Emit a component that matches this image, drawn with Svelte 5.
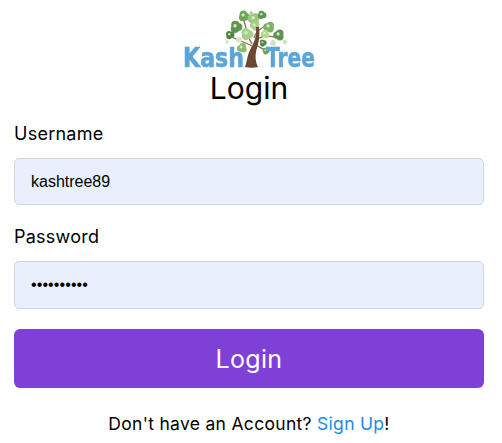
<script>
  const clusters = [
    [245,16,4.5,'#6ea45c'],[255,19,5,'#9cc77a'],[263,15,3.5,'#5f9450'],[256,26,4,'#a9d08a'],[237,27,5,'#5f9450'],
    [270,27,4.5,'#7fb069'],[248,34,5,'#a9d08a'],[280,35,4.5,'#5f9450'],[231,35,3.5,'#4f8444'],[266,34,3.5,'#b5d88f'],
    [264,43,3,'#4f8444'],[243,48,4,'#8dbb6e'],[267,51,3,'#6fa35a'],[274,43,2.5,'#cfe6b8'],[286,42,2,'#cfe6b8'],[240,40,2.5,'#d5e9c2'],[278,49,1.8,'#d5e9c2'],[252,13,1.5,'#a9d08a'],[228,42,1.5,'#cfe6b8']
  ];
  const lobes = [0.4, 2.3, 4.4];
</script>

<main class="page">
  <div class="brand">
    <svg class="tree" viewBox="165 8 170 68" width="170" height="68" aria-hidden="true">
      <g stroke="#8a6a58" stroke-width="1.3" fill="none">
        <path d="M253 46 C246 42 240 41 233 37"/>
        <path d="M257 40 C262 36 270 35 279 38"/>
        <path d="M255 38 C256 32 262 28 269 24"/>
        <path d="M253 44 C248 36 247 28 245 20"/>
        <path d="M258 33 C258 28 256 24 255 20"/>
        <path d="M256 44 C260 47 263 49 267 50"/>
      </g>
      {#each clusters as [x, y, r, fill], i}
        {#each lobes as a}
          <circle cx={x + Math.cos(a + i) * r * 0.45} cy={y + Math.sin(a + i) * r * 0.45} r={r * 0.82} {fill}/>
        {/each}
        <circle cx={x - r * 0.2} cy={y - r * 0.25} r={r * 0.35} fill="#d5e9c2"/>
      {/each}
      <path d="M257 27 C258 38 254 44 251 50 C248 56 248 62 246 67 C250 68 255 68 259 67 C256 61 256 54 258 48 C260 42 261 35 260 27 Z" fill="#6b4830"/>
      <text x="184" y="67" class="word" textLength="61" lengthAdjust="spacingAndGlyphs">Kash</text>
      <text x="267" y="67" class="word" textLength="49" lengthAdjust="spacingAndGlyphs">Tree</text>
    </svg>
  </div>
  <h1>Login</h1>
  <form class="form">
    <label class="field">
      <span>Username</span>
      <input type="text" value="kashtree89" />
    </label>
    <label class="field second">
      <span>Password</span>
      <input type="password" value="kashtree89" />
    </label>
    <button type="button">Login</button>
  </form>
  <p class="foot">Don't have an Account? <a href="#signup">Sign Up</a>!</p>
</main>

<style>
  :global(body) { margin: 0; background: #fff; }
  .page {
    box-sizing: border-box;
    width: 502px;
    height: 443px;
    padding: 8px 18px 0 14px;
    font-family: "Inter", "Open Sans", sans-serif;
    color: #000;
    overflow: hidden;
  }
  .brand { display: flex; justify-content: center; height: 60px; }
  .tree { display: block; flex: none; filter: blur(0.5px); }
  .word {
    font-family: "DejaVu Sans", sans-serif;
    font-weight: 700;
    font-size: 26px;
    fill: #5ba6d9;
    stroke: #5ba6d9;
    stroke-width: 0.6px;
    stroke-linejoin: round;
  }
  h1 {
    margin: 0;
    font-weight: 400;
    font-size: 30px;
    line-height: 40px;
    text-align: center;
  }
  .form { display: flex; flex-direction: column; margin-top: 15px; }
  .field { display: flex; flex-direction: column; gap: 13px; margin-bottom: 21px; }
  .second { margin-bottom: 20px; }
  .field span { font-size: 18px; line-height: 22px; letter-spacing: 0.25px; }
  input {
    box-sizing: border-box;
    width: 100%;
    height: 47px;
    padding: 0 16px;
    background: #e8f0fe;
    border: 1px solid #ced4da;
    border-radius: 5px;
    font-family: "Liberation Sans", sans-serif;
    font-size: 16px;
    color: #000;
    outline: none;
  }
  .second input { height: 48px; letter-spacing: 0.1px; }
  button {
    height: 59px;
    border: 0;
    border-radius: 6px;
    background: #7e40d6;
    color: #fff;
    font-family: inherit;
    font-size: 25px;
    letter-spacing: 0.3px;
  }
  .foot {
    margin: 25px 0 0;
    text-align: center;
    font-size: 17.5px;
    line-height: 22px;
    letter-spacing: 0.3px;
  }
  a { color: #1e88f0; text-decoration: none; }
</style>
